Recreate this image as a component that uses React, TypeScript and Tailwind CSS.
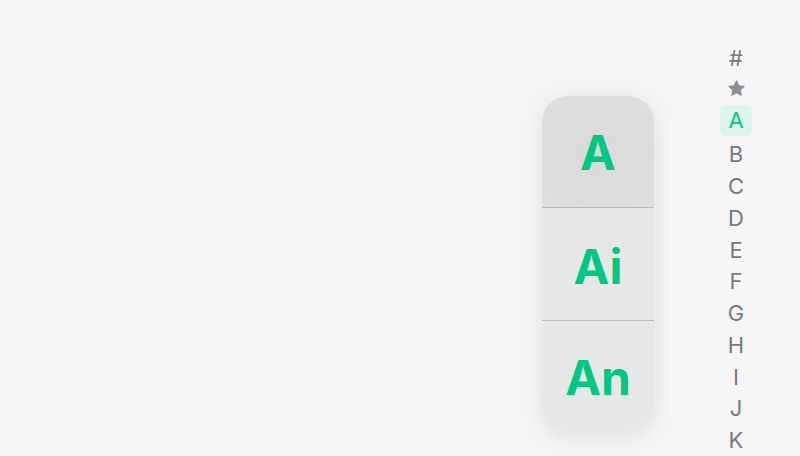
import React from "react";

const letters = ["A", "B", "C", "D", "E", "F", "G", "H", "I", "J", "K"];

function Star() {
  return (
    <svg width="19" height="19" viewBox="0 0 24 24" fill="#8b9096" stroke="#8b9096" strokeWidth="1.5" strokeLinejoin="round">
      <path d="M12 2.5l2.9 6.1 6.6.8-4.9 4.6 1.3 6.6L12 17.3l-5.9 3.3 1.3-6.6-4.9-4.6 6.6-.8z" />
    </svg>
  );
}

export default function App() {
  return (
    <div
      className="w-full h-[456px] bg-[#f6f6f6] flex justify-end overflow-hidden pr-[48px]"
      style={{ fontFamily: "'Inter', 'Noto Sans', sans-serif" }}
    >
      <div className="mt-[96px] mr-[66px] w-[112px] h-[336px] rounded-[26px] overflow-hidden flex flex-col shadow-[0_4px_24px_rgba(0,0,0,0.10)]">
        <div className="h-[111px] flex items-center justify-center pt-[2px] bg-[radial-gradient(circle,#d9dad9,#dddede)] text-[48px] font-bold text-[#00c884] leading-none">
          A
        </div>
        <div className="h-px bg-[#b9baba]" />
        <div className="h-[112px] flex items-center justify-center pt-[6px] bg-[#e6e7e7] text-[48px] font-bold text-[#00c884] leading-none">
          Ai
        </div>
        <div className="h-px bg-[#b9baba]" />
        <div className="h-[111px] flex items-center justify-center pt-[2px] bg-[#e6e7e7] text-[48px] font-bold text-[#00c884] leading-none">
          An
        </div>
      </div>
      <div className="pt-[41px] flex flex-col items-center w-8">
        <div className="h-8 w-8 flex items-center justify-center pt-[3px] text-[22px] text-[#737a82] leading-none">#</div>
        <div className="h-8 w-8 flex items-center justify-center">
          <Star />
        </div>
        {letters.map((l) =>
          l === "A" ? (
            <div key={l} className="h-8 w-8 mb-[2px] flex items-center justify-center rounded-md bg-[#dcf4ea] text-[22px] text-[#00c884] leading-none">
              {l}
            </div>
          ) : (
            <div key={l} className="h-8 w-8 flex items-center justify-center text-[22px] text-[#737a82] leading-none">
              {l}
            </div>
          )
        )}
      </div>
    </div>
  );
}
